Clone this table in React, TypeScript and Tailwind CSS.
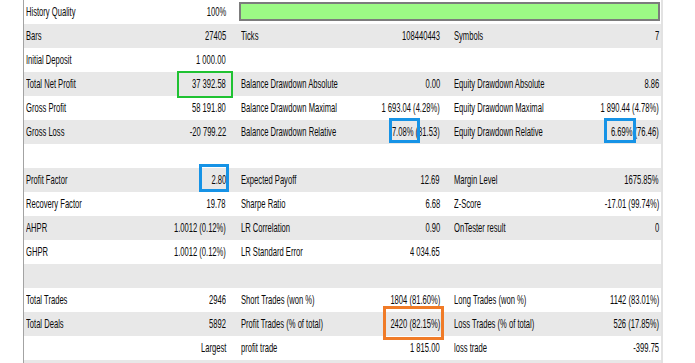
import React from "react";

type Pair = [string, string];
type Row = { a?: Pair; b?: Pair; c?: Pair; bar?: boolean };

const rows: Row[] = [
  { a: ["History Quality", "100%"], bar: true },
  { a: ["Bars", "27405"], b: ["Ticks", "108440443"], c: ["Symbols", "7"] },
  { a: ["Initial Deposit", "1 000.00"] },
  { a: ["Total Net Profit", "37 392.58"], b: ["Balance Drawdown Absolute", "0.00"], c: ["Equity Drawdown Absolute", "8.86"] },
  { a: ["Gross Profit", "58 191.80"], b: ["Balance Drawdown Maximal", "1 693.04 (4.28%)"], c: ["Equity Drawdown Maximal", "1 890.44 (4.78%)"] },
  { a: ["Gross Loss", "-20 799.22"], b: ["Balance Drawdown Relative", "7.08% (81.53)"], c: ["Equity Drawdown Relative", "6.69% (76.46)"] },
  {},
  { a: ["Profit Factor", "2.80"], b: ["Expected Payoff", "12.69"], c: ["Margin Level", "1675.85%"] },
  { a: ["Recovery Factor", "19.78"], b: ["Sharpe Ratio", "6.68"], c: ["Z-Score", "-17.01 (99.74%)"] },
  { a: ["AHPR", "1.0012 (0.12%)"], b: ["LR Correlation", "0.90"], c: ["OnTester result", "0"] },
  { a: ["GHPR", "1.0012 (0.12%)"], b: ["LR Standard Error", "4 034.65"] },
  {},
  { a: ["Total Trades", "2946"], b: ["Short Trades (won %)", "1804 (81.60%)"], c: ["Long Trades (won %)", "1142 (83.01%)"] },
  { a: ["Total Deals", "5892"], b: ["Profit Trades (% of total)", "2420 (82.15%)"], c: ["Loss Trades (% of total)", "526 (17.85%)"] },
  { a: ["", "Largest"], b: ["profit trade", "1 815.00"], c: ["loss trade", "-399.75"] },
  {},
];

function Cell({ p, cls }: { p?: Pair; cls: string }) {
  return (
    <div className={`flex items-center h-full ${cls}`}>
      <span className="flex-1 min-w-0 whitespace-nowrap">
        <span className="inline-block origin-left scale-x-[0.585]">{p ? p[0] : ""}</span>
      </span>
      <span className="shrink-0 whitespace-nowrap">
        <span className="inline-block origin-right scale-x-[0.585]">{p ? p[1] : ""}</span>
      </span>
    </div>
  );
}

export default function App() {
  return (
    <div
      className="relative w-[695px] h-[363px] overflow-hidden bg-white text-[13px] leading-[24px] text-[#0a0a0a]"
      style={{ fontFamily: '"Liberation Sans", Arial, sans-serif' }}
    >
      <div className="flex h-full">
        <div className="w-[23px] shrink-0" />
        <div className="w-px shrink-0 bg-[#a3a3a3]" />
        <div className="w-[637px] shrink-0 flex flex-col">
          {rows.map((r, i) => (
            <div key={i} className={`flex h-[24px] shrink-0 ${i % 2 === 1 ? "bg-[#e8e8e8]" : "bg-white"}`}>
              <Cell p={r.a} cls="w-[206px] pl-[2px] pr-[4px]" />
              {r.bar ? (
                <div className="w-[431px] pl-[9px] pr-[1px] pt-[2px] pb-[3px] h-full">
                  <div className="h-full border-2 border-[#7c7c7c] bg-[#9cfa85]" />
                </div>
              ) : (
                <>
                  <Cell p={r.b} cls="w-[217px] pl-[11px] pr-[7px]" />
                  <Cell p={r.c} cls="w-[214px] pl-[7px] pr-[2px]" />
                </>
              )}
            </div>
          ))}
        </div>
        <div className="w-[2px] shrink-0 bg-[#e2e2e2]" />
      </div>

      <div className="absolute left-[177px] top-[71px] w-[56px] h-[27px] border-2 border-[#1fc232]" />
      <div className="absolute left-[389px] top-[118px] w-[31px] h-[25px] border-[3px] border-[#1693e6]" />
      <div className="absolute left-[604px] top-[118px] w-[32px] h-[25px] border-[3px] border-[#1693e6]" />
      <div className="absolute left-[199px] top-[164px] w-[30px] h-[28px] border-[3px] border-[#1693e6]" />
      <div className="absolute left-[383px] top-[306px] w-[61px] h-[34px] border-[3px] border-[#f07b27]" />
    </div>
  );
}
